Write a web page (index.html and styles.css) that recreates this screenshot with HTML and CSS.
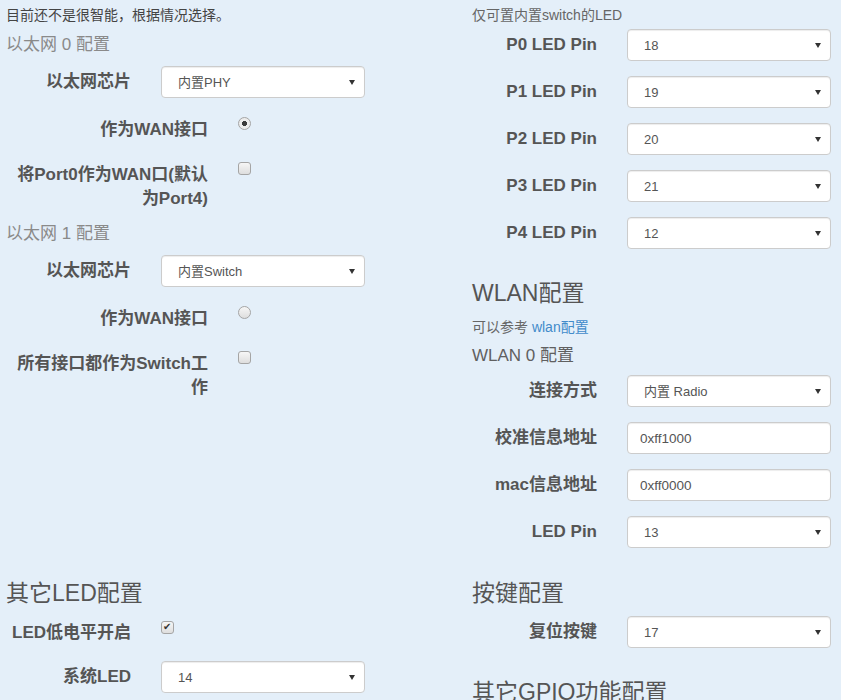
FILE: index.html
```html
<!DOCTYPE html>
<html lang="zh-CN">
<head>
<meta charset="utf-8">
<title>硬件配置</title>
<link rel="stylesheet" href="styles.css">
</head>
<body>
<form class="config">
  <!-- ethernet ports -->
  <section class="col">
    <p class="intro">目前还不是很智能，根据情况选择。</p>
    <h4 class="subtitle">以太网 0 配置</h4>
    <div class="field">
      <label class="field-label">以太网芯片</label>
      <div class="select-wrap"><select class="control"><option>内置PHY</option></select></div>
    </div>
    <div class="field field--wide field--check">
      <label class="field-label">作为WAN接口</label>
      <input type="radio" name="wan0" class="radio" checked>
    </div>
    <div class="field field--wide field--check field--wrap">
      <label class="field-label">将Port0作为WAN口(默认为Port4)</label>
      <input type="checkbox" class="check">
    </div>

    <h4 class="subtitle">以太网 1 配置</h4>
    <div class="field">
      <label class="field-label">以太网芯片</label>
      <div class="select-wrap"><select class="control"><option>内置Switch</option></select></div>
    </div>
    <div class="field field--wide field--check">
      <label class="field-label">作为WAN接口</label>
      <input type="radio" name="wan1" class="radio">
    </div>
    <div class="field field--wide field--check field--wrap">
      <label class="field-label">所有接口都作为Switch工作</label>
      <input type="checkbox" class="check">
    </div>
  </section>

  <!-- switch LEDs and wireless -->
  <section class="col">
    <p class="intro intro--muted">仅可置内置switch的LED</p>
    <div class="field">
      <label class="field-label">P0 LED Pin</label>
      <div class="select-wrap"><select class="control"><option>18</option></select></div>
    </div>
    <div class="field">
      <label class="field-label">P1 LED Pin</label>
      <div class="select-wrap"><select class="control"><option>19</option></select></div>
    </div>
    <div class="field">
      <label class="field-label">P2 LED Pin</label>
      <div class="select-wrap"><select class="control"><option>20</option></select></div>
    </div>
    <div class="field">
      <label class="field-label">P3 LED Pin</label>
      <div class="select-wrap"><select class="control"><option>21</option></select></div>
    </div>
    <div class="field">
      <label class="field-label">P4 LED Pin</label>
      <div class="select-wrap"><select class="control"><option>12</option></select></div>
    </div>

    <h3 class="heading heading--wlan">WLAN配置</h3>
    <p class="note">可以参考 <a href="#">wlan配置</a></p>
    <h4 class="subtitle subtitle--dark">WLAN 0 配置</h4>
    <div class="field">
      <label class="field-label">连接方式</label>
      <div class="select-wrap"><select class="control"><option>内置 Radio</option></select></div>
    </div>
    <div class="field">
      <label class="field-label">校准信息地址</label>
      <input type="text" class="control control--text" value="0xff1000">
    </div>
    <div class="field">
      <label class="field-label">mac信息地址</label>
      <input type="text" class="control control--text" value="0xff0000">
    </div>
    <div class="field">
      <label class="field-label">LED Pin</label>
      <div class="select-wrap"><select class="control"><option>13</option></select></div>
    </div>
  </section>

  <!-- other LEDs -->
  <section class="col">
    <h3 class="heading">其它LED配置</h3>
    <div class="field field--check">
      <label class="field-label">LED低电平开启</label>
      <input type="checkbox" class="check" checked>
    </div>
    <div class="field">
      <label class="field-label">系统LED</label>
      <div class="select-wrap"><select class="control"><option>14</option></select></div>
    </div>
  </section>

  <!-- buttons and misc GPIO -->
  <section class="col">
    <h3 class="heading">按键配置</h3>
    <div class="field">
      <label class="field-label">复位按键</label>
      <div class="select-wrap"><select class="control"><option>17</option></select></div>
    </div>
    <h3 class="heading">其它GPIO功能配置</h3>
  </section>
</form>
</body>
</html>
```

FILE: styles.css
```css
* {
  box-sizing: border-box;
}

html,
body {
  margin: 0;
}

body {
  background: #e4eff9;
  color: #555;
  font-family: "Liberation Sans", "Noto Sans CJK SC", sans-serif;
  font-size: 14px;
  line-height: 20px;
  overflow: hidden;
}

.config {
  display: grid;
  grid-template-columns: 436px auto;
  column-gap: 30px;
  align-items: start;
  padding: 5px 0 0 6px;
}

.intro {
  margin: 0;
  color: #444;
}

.intro--muted {
  color: #666;
  margin-bottom: 4px;
}

.subtitle {
  margin: 8px 0 9px;
  font-size: 17px;
  line-height: 24px;
  font-weight: normal;
  color: #8a8a8a;
}

.subtitle--dark {
  color: #606060;
  margin: 7px 0;
}

.heading {
  margin: 18px 0 10px;
  font-size: 23px;
  line-height: 25px;
  font-weight: normal;
  color: #555;
}

/* a section title placed right after a form row */
.field + .heading {
  margin-top: 32px;
}

.heading--wlan {
  margin-bottom: 0;
}

.note {
  margin: 11px 0 0;
  color: #666;
}

.note a {
  color: #428bca;
  text-decoration: none;
}

/* label + control rows */
.field {
  display: flex;
  align-items: center;
  column-gap: 30px;
  margin-bottom: 15px;
}

.field-label {
  flex: 0 0 125px;
  text-align: right;
  font-size: 17px;
  line-height: 24px;
  font-weight: bold;
  color: #555;
}

.field--wide .field-label {
  flex-basis: 202px;
}

.field--check {
  align-items: flex-start;
  min-height: 30px;
}

.field--check .field-label {
  padding-top: 5px;
}

.field--wrap {
  margin-bottom: 11px;
}

.select-wrap {
  position: relative;
  width: 204px;
}

.select-wrap::after {
  content: "";
  position: absolute;
  right: 10px;
  top: 14px;
  border-left: 3px solid transparent;
  border-right: 3px solid transparent;
  border-top: 5px solid #333;
}

.control {
  display: block;
  width: 204px;
  height: 32px;
  margin: 0;
  padding: 0 24px 0 16px;
  border: 1px solid #ccc;
  border-radius: 4px;
  background: #fff;
  box-shadow: inset 0 1px 1px rgba(0, 0, 0, 0.075);
  font-family: inherit;
  font-size: 13px;
  color: #555;
  appearance: none;
  -webkit-appearance: none;
  outline: none;
}

.control--text {
  padding: 0 12px;
  font-size: 13.5px;
}

/* radio and checkbox */
.radio,
.check {
  appearance: none;
  -webkit-appearance: none;
  width: 13px;
  height: 13px;
  margin: 4px 0 0;
  border: 1px solid #a5a5a5;
  background: linear-gradient(#f6f6f6, #dedede);
  position: relative;
}

.radio {
  border-radius: 50%;
}

.radio:checked {
  background: radial-gradient(circle, #3a3a3a 0 2.3px, #ececec 2.8px);
}

.check {
  border-radius: 3px;
}

.field--check:not(.field--wide) .check {
  margin-top: 5px;
}

.check:checked::after {
  content: "✔";
  position: absolute;
  left: 1px;
  top: -2px;
  font-size: 10px;
  line-height: 14px;
  color: #333;
}
```
